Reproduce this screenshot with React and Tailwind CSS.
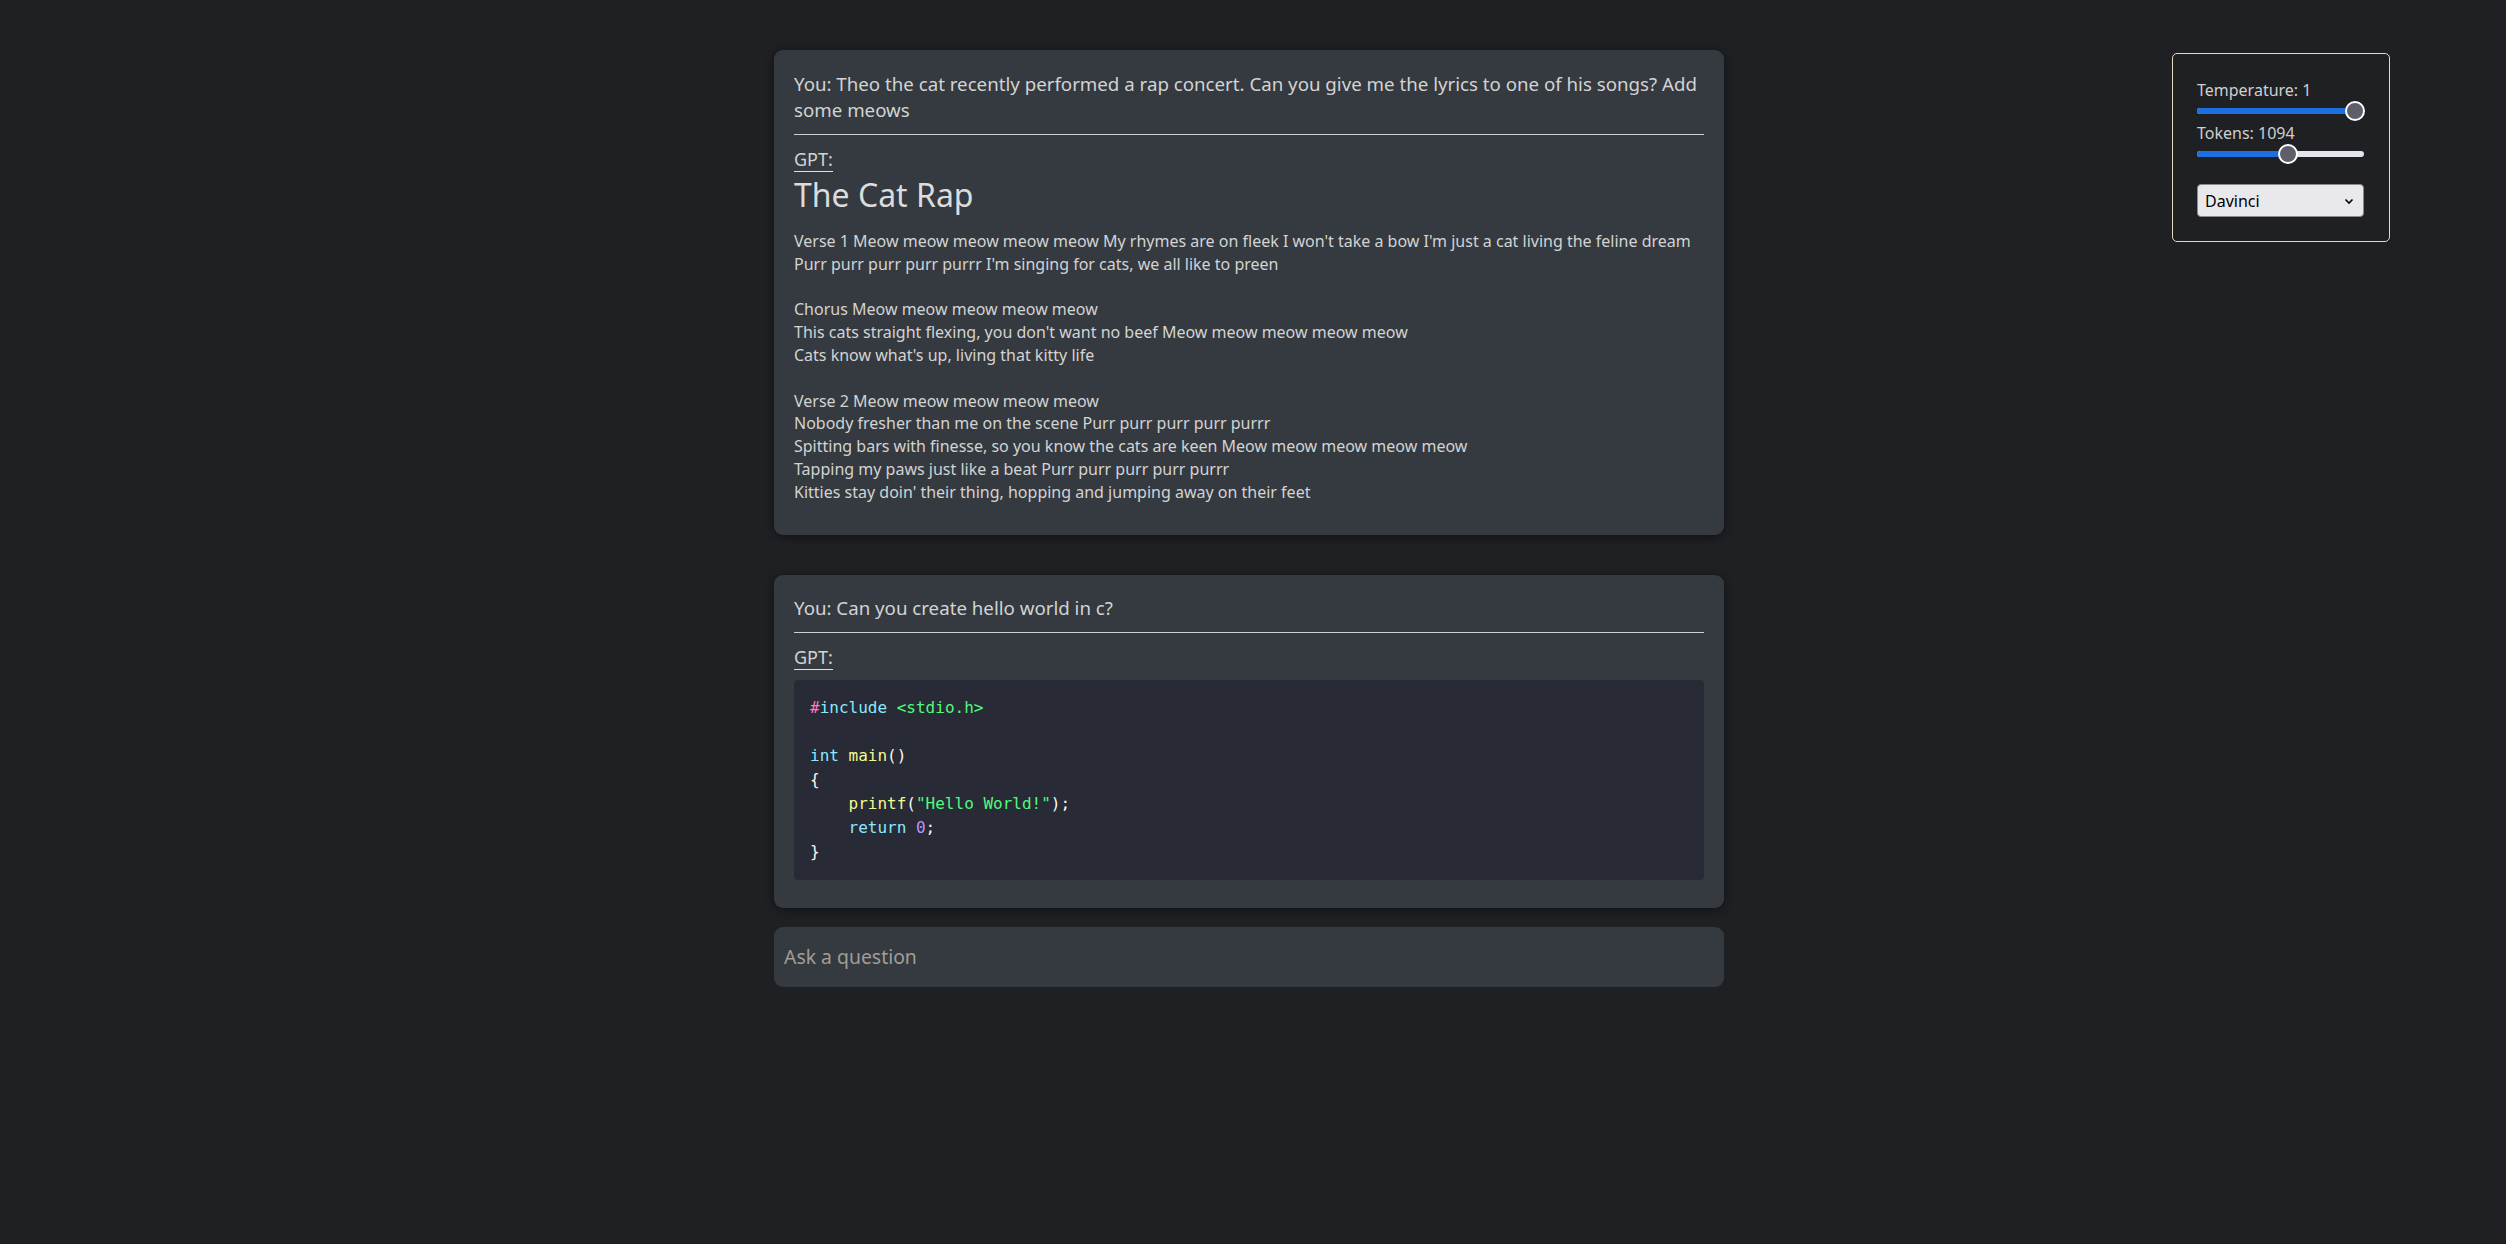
import React from 'react'

const lyrics = [
  "Verse 1 Meow meow meow meow meow My rhymes are on fleek I won't take a bow I'm just a cat living the feline dream",
  "Purr purr purr purr purrr I'm singing for cats, we all like to preen",
  '',
  'Chorus Meow meow meow meow meow',
  "This cats straight flexing, you don't want no beef Meow meow meow meow meow",
  "Cats know what's up, living that kitty life",
  '',
  'Verse 2 Meow meow meow meow meow',
  'Nobody fresher than me on the scene Purr purr purr purr purrr',
  'Spitting bars with finesse, so you know the cats are keen Meow meow meow meow meow',
  'Tapping my paws just like a beat Purr purr purr purr purrr',
  "Kitties stay doin' their thing, hopping and jumping away on their feet",
]

const Slider = ({ label, thumb }) => {
  return (
    <div className="flex flex-col">
      <span className="text-[16px] leading-[22px] text-[#cfcfcf]">{label}</span>
      <div className="relative h-[20px] w-[167px]">
        {/* track */}
        <div className="absolute left-0 right-0 top-[7px] h-[6px] rounded-full bg-[#e4e4ea]" />
        <div className="absolute left-0 top-[7px] h-[6px] rounded-full bg-[#1b6fde]" style={{ width: thumb }} />
        {/* thumb */}
        <div
          className="absolute top-0 h-[20px] w-[20px] -translate-x-1/2 rounded-full border-2 border-white bg-[#5e5f6b]"
          style={{ left: thumb }}
        />
      </div>
    </div>
  )
}

const Settings = () => {
  return (
    <div className="mr-[108px] mt-[53px] flex h-[189px] w-[218px] flex-col rounded-[5px] border border-[#e6d8c0] px-[24px] pt-[25px]">
      <Slider label="Temperature: 1" thumb={158} />
      <div className="mt-[1px]">
        <Slider label="Tokens: 1094" thumb={91} />
      </div>
      <div className="mt-[20px] flex h-[33px] w-[167px] items-center justify-between rounded-[4px] border border-[#8a8a8a] bg-[#e9e8ed] pl-[7px] pr-[8px] text-[16px] text-black">
        <span>Davinci</span>
        <svg width="12" height="12" viewBox="0 0 12 12" fill="none" stroke="black" strokeWidth="1.6">
          <path d="M2.5 4.5 6 8l3.5-3.5" />
        </svg>
      </div>
    </div>
  )
}

const Gpt = () => (
  <div className="mt-[12px]">
    <span className="inline-block border-b-[1.5px] border-[#f5deb3] text-[18px] leading-[24px]">GPT:</span>
  </div>
)

const Question = ({ children }) => (
  <>
    <p className="text-[18.7px] leading-[26px]">{children}</p>
    <hr className="mt-[11px] border-t-[1.5px] border-[#cfcfcf]" />
  </>
)

const Code = () => (
  <pre className="mt-[10px] rounded-[4px] bg-[#282a36] p-[16px] font-['DejaVu_Sans_Mono',monospace] text-[16px] leading-[24px] text-[#f8f8f2]">
    <span className="text-[#ff79c6]">#</span>
    <span className="text-[#8be9fd]">include</span>{' '}
    <span className="text-[#50fa7b]">&lt;stdio.h&gt;</span>
    {'\n\n'}
    <span className="text-[#8be9fd]">int</span>{' '}
    <span className="text-[#f1fa8c]">main</span>(){'\n'}
    {'{\n    '}
    <span className="text-[#f1fa8c]">printf</span>(
    <span className="text-[#50fa7b]">"Hello World!"</span>);{'\n    '}
    <span className="text-[#8be9fd]">return</span>{' '}
    <span className="text-[#bd93f9]">0</span>;{'\n'}
    {'}'}
  </pre>
)

export default function App() {
  return (
    <div className="min-h-[1244px] bg-[#1f2024] font-['Noto_Sans',sans-serif] text-[#d3d3d3]">
      <div className="grid grid-cols-[1fr_950px_1fr] pr-[8px]">
        <div />
        <div className="flex flex-col pt-[50px]">
          {/* first exchange */}
          <div className="rounded-[9px] bg-[#343a40] px-[20px] pb-[31px] pt-[21px] shadow-[0_2px_10px_rgba(0,0,0,0.45)]">
            <Question>
              You: Theo the cat recently performed a rap concert. Can you give me the lyrics to one of his songs? Add some meows
            </Question>
            <Gpt />
            <h1 className="mt-[1px] text-[32px] leading-[43px] text-[#dcdcdc]">The Cat Rap</h1>
            <div className="mt-[14px] text-[16px] leading-[22.8px]">
              {lyrics.map((line, i) => (
                <div key={i} className="h-[22.8px] whitespace-pre">
                  {line}
                </div>
              ))}
            </div>
          </div>

          {/* second exchange */}
          <div className="mt-[40px] rounded-[9px] bg-[#343a40] px-[20px] pb-[28px] pt-[20px] shadow-[0_2px_10px_rgba(0,0,0,0.45)]">
            <Question>You: Can you create hello world in c?</Question>
            <Gpt />
            <Code />
          </div>

          {/* input */}
          <div className="mt-[19px] flex h-[60px] items-center rounded-[9px] bg-[#343a40] px-[10px]">
            <input
              className="w-full bg-transparent text-[19.4px] text-[#d3d3d3] outline-none placeholder:text-[#a19d98]"
              placeholder="Ask a question"
            />
          </div>
        </div>
        <div className="flex justify-end">
          <div>
            <Settings />
          </div>
        </div>
      </div>
    </div>
  )
}
